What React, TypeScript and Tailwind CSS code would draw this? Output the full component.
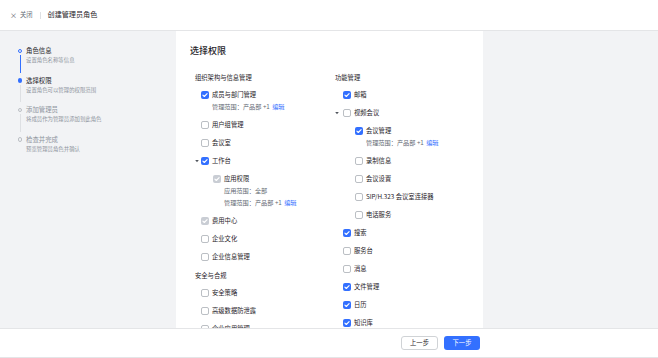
import React from "react";

type St = "on" | "off" | "dis";

function Cb({ s }: { s: St }) {
  if (s === "off")
    return <span className="block w-[8px] h-[8px] shrink-0 rounded-[2px] border border-[#bbbfc4] bg-white" />;
  return (
    <span
      className={
        "flex w-[8px] h-[8px] shrink-0 items-center justify-center rounded-[2px] " +
        (s === "on" ? "bg-[#3370ff]" : "bg-[#c9cdd4]")
      }
    >
      <svg width="8" height="8" viewBox="0 0 8 8">
        <path d="M1.9 4.1 L3.3 5.5 L6.1 2.6" fill="none" stroke="#fff" strokeWidth="1.1" strokeLinecap="round" strokeLinejoin="round" />
      </svg>
    </span>
  );
}

function Caret() {
  return (
    <svg width="4" height="4" viewBox="0 0 4 4">
      <path d="M0.2 1 L3.8 1 L2 3.2 Z" fill="#51565d" />
    </svg>
  );
}

type ItemProps = {
  label: string;
  s: St;
  slot: number;
  indent?: boolean;
  caret?: boolean;
  subs?: React.ReactNode[];
};

function Item({ label, s, slot, indent, caret, subs }: ItemProps) {
  return (
    <div className={"py-[3px] " + (indent ? "pl-[12px]" : "")}>
      <div className="flex h-[12px] items-center">
        <span className={"flex h-[12px] items-center justify-start " + (slot === 6 ? "w-[6px]" : "w-[8px]")}>
          {caret ? <Caret /> : null}
        </span>
        <Cb s={s} />
        <span className="ml-[3px] text-[6.3px] leading-[12px] text-[#1f2329] whitespace-nowrap">{label}</span>
      </div>
      {subs?.map((t, i) => (
        <div
          key={i}
          className={"flex h-[12px] items-center text-[6.2px] leading-[12px] text-[#646a73] whitespace-nowrap " + (slot === 6 ? "pl-[17px]" : "pl-[19px]")}
        >
          {t}
        </div>
      ))}
    </div>
  );
}

function Scope() {
  return (
    <span>
      管理范围：产品部 +1 <span className="text-[#3370ff] ml-[1px]">编辑</span>
    </span>
  );
}

function Label({ t, extra }: { t: string; extra?: string }) {
  return (
    <div className={"flex h-[16px] items-center text-[6.3px] text-[#1f2329] whitespace-nowrap " + (extra ?? "")}>{t}</div>
  );
}

const steps = [
  { t: "角色信息", d: "设置角色名称等信息", state: "done" },
  { t: "选择权限", d: "设置角色可以管理的权限范围", state: "cur" },
  { t: "添加管理员", d: "将成员作为管理员添加到此角色", state: "todo" },
  { t: "检查并完成", d: "预览管理员角色并确认", state: "todo" },
];

export default function App() {
  return (
    <div className="flex h-[358px] w-[658px] flex-col overflow-hidden bg-white font-[family-name:'Noto_Sans_CJK_SC','Noto_Sans',sans-serif]">
      {/* header */}
      <div className="flex h-[31px] shrink-0 items-center border-b border-[#e4e5e7] pl-[10px]">
        <span className="text-[7px] leading-none text-[#51565d]">×</span>
        <span className="ml-[3px] text-[6.3px] leading-none text-[#646a73]">关闭</span>
        <span className="ml-[7px] h-[7px] w-px bg-[#dee0e3]" />
        <span className="ml-[7px] text-[7.1px] leading-none text-[#1f2329]">创建管理员角色</span>
      </div>

      {/* body */}
      <div className="flex min-h-0 flex-1">
        {/* sidebar */}
        <div className="w-[176px] shrink-0 bg-[#f2f3f5] pl-[15px] pt-[15px]">
          {steps.map((st, i) => (
            <div key={i} className="flex h-[29.5px]">
              <div className="flex w-[10px] flex-col items-center">
                <div className="flex h-[10px] items-center justify-center">
                  {st.state === "cur" ? (
                    <span className="block h-[4.5px] w-[4.5px] rounded-full bg-[#3370ff]" />
                  ) : (
                    <span
                      className={
                        "block h-[4.5px] w-[4.5px] rounded-full border " +
                        (st.state === "done" ? "border-[#3370ff]" : "border-[#bbbfc4]")
                      }
                    />
                  )}
                </div>
                {i < steps.length - 1 ? (
                  <span className={"mt-[-1px] mb-[3px] w-px flex-1 " + (st.state === "done" ? "bg-[#3370ff]" : "bg-[#dee0e3]")} />
                ) : null}
              </div>
              <div className="ml-[1px]">
                <div
                  className={
                    "h-[10px] text-[6.4px] leading-[10px] whitespace-nowrap " +
                    (st.state === "todo" ? "text-[#8f959e]" : "text-[#1f2329]")
                  }
                >
                  {st.t}
                </div>
                <div className="h-[9px] text-[5.4px] leading-[9px] text-[#8f959e] whitespace-nowrap">{st.d}</div>
              </div>
            </div>
          ))}
        </div>

        {/* main panel */}
        <div className="w-[307px] shrink-0 overflow-hidden bg-white pt-[12px]">
          <div className="ml-[14px] mb-[11px] h-[16px] text-[9px] font-medium leading-[16px] text-[#1f2329]">选择权限</div>
          <div className="flex pl-[19px]">
            <div className="w-[140px]">
              <Label t="组织架构与信息管理" />
              <Item slot={6} s="on" label="成员与部门管理" subs={[<Scope />]} />
              <Item slot={6} s="off" label="用户组管理" />
              <Item slot={6} s="off" label="会议室" />
              <Item slot={6} s="on" label="工作台" caret />
              <Item slot={6} s="dis" indent label="应用权限" subs={["应用范围：全部", <Scope />]} />
              <Item slot={6} s="dis" label="费用中心" />
              <Item slot={6} s="off" label="企业文化" />
              <Item slot={6} s="off" label="企业信息管理" />
              <Label t="安全与合规" extra="mt-[2px]" />
              <Item slot={6} s="off" label="安全策略" />
              <Item slot={6} s="off" label="高级数据防泄露" />
              <Item slot={6} s="off" label="企业应用管理" />
            </div>
            <div className="w-[140px]">
              <Label t="功能管理" />
              <Item slot={8} s="on" label="邮箱" />
              <Item slot={8} s="off" label="视频会议" caret />
              <Item slot={8} s="on" indent label="会议管理" subs={[<Scope />]} />
              <Item slot={8} s="off" indent label="录制信息" />
              <Item slot={8} s="off" indent label="会议设置" />
              <Item slot={8} s="off" indent label="SIP/H.323 会议室连接器" />
              <Item slot={8} s="off" indent label="电话服务" />
              <Item slot={8} s="on" label="搜索" />
              <Item slot={8} s="off" label="服务台" />
              <Item slot={8} s="off" label="消息" />
              <Item slot={8} s="on" label="文件管理" />
              <Item slot={8} s="on" label="日历" />
              <Item slot={8} s="on" label="知识库" />
            </div>
          </div>
        </div>

        <div className="flex-1 bg-[#f2f3f5]" />
      </div>

      {/* footer */}
      <div className="flex h-[30px] shrink-0 border-t border-b border-[#e4e5e7] bg-white">
        <div className="w-[176px] shrink-0" />
        <div className="flex w-[307px] items-center justify-end gap-[6px] pr-[3px]">
          <button className="flex h-[14px] w-[37px] items-center justify-center rounded-[3px] border border-[#d0d3d6] bg-white text-[6.3px] leading-none text-[#1f2329]">
            上一步
          </button>
          <button className="flex h-[14px] w-[36px] items-center justify-center rounded-[3px] bg-[#3370ff] text-[6.3px] leading-none text-white">
            下一步
          </button>
        </div>
      </div>
    </div>
  );
}
